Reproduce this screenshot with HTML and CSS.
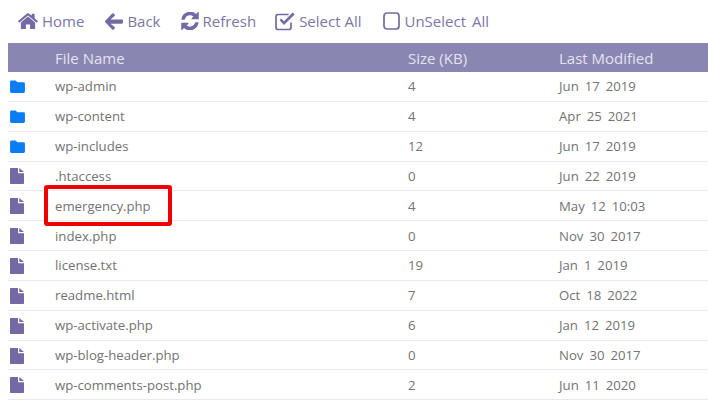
FILE: index.html
```html
<!DOCTYPE html>
<html lang="en">
<head>
<meta charset="utf-8">
<title>File Manager</title>
<link rel="stylesheet" href="styles.css">
</head>
<body>
<svg class="defs" width="0" height="0" aria-hidden="true">
  <symbol id="folder" viewBox="0 0 16 14"><path d="M1.5 0.5H6L7.8 2.5H14.5A1.5 1.5 0 0 1 16 4V12.5A1.5 1.5 0 0 1 14.5 14H1.5A1.5 1.5 0 0 1 0 12.5V2A1.5 1.5 0 0 1 1.5 0.5Z"/></symbol>
  <symbol id="file" viewBox="0 0 14 16"><path d="M0 0.8A.8.8 0 0 1 .8 0H8V4.4A.9.9 0 0 0 8.9 5.3H14V15.2A.8.8 0 0 1 13.2 16H.8A.8.8 0 0 1 0 15.2ZM9.3 0 14 4.1H9.3Z"/></symbol>
</svg>
<nav class="toolbar">
  <span class="tool"><svg class="ico ico-home" viewBox="0 0 20 17"><path d="M10 3.6 2.9 9.5V15.4A.7.7 0 0 0 3.6 16.1H7.9V11.4H12.1V16.1H16.4A.7.7 0 0 0 17.1 15.4V9.5ZM19.8 7.9 16.6 5.2V1.2A.4.4 0 0 0 16.2.8H14A.4.4 0 0 0 13.6 1.2V2.8L11 .6A1.6 1.6 0 0 0 9 .6L.2 7.9A.4.4 0 0 0 .2 8.5L1 9.4A.4.4 0 0 0 1.6 9.4L10 2.4 18.4 9.4A.4.4 0 0 0 19 9.4L19.8 8.5A.4.4 0 0 0 19.8 7.9Z"/></svg>Home</span>
  <span class="tool"><svg class="ico ico-back" viewBox="0 0 18 17"><path d="M9.6 15.6 8.6 16.6A1 1 0 0 1 7.2 16.6L.3 9.3A1.1 1.1 0 0 1 .3 7.8L7.2.5A1 1 0 0 1 8.6.5L9.6 1.5A1.1 1.1 0 0 1 9.6 3L5.5 6.4H16.9A1.1 1.1 0 0 1 18 7.5V9.6A1.1 1.1 0 0 1 16.9 10.7H5.5L9.6 14.1A1.1 1.1 0 0 1 9.6 15.6Z"/></svg>Back</span>
  <span class="tool tool-refresh"><svg class="ico ico-refresh" viewBox="0 0 18 18"><path d="M9 3.2C10.3 3.2 11.5 3.7 12.4 4.5L10.6 6.3A.6.6 0 0 0 11 7.3H17.2A.6.6 0 0 0 17.8 6.7V.6A.6.6 0 0 0 16.8.2L15 2A8.8 8.8 0 0 0 .4 7.2.4.4 0 0 0 .8 7.7H3.4A.4.4 0 0 0 3.8 7.4 5.5 5.5 0 0 1 9 3.2ZM17.2 10.3H14.6A.4.4 0 0 0 14.2 10.6 5.5 5.5 0 0 1 5.6 13.5L7.4 11.7A.6.6 0 0 0 7 10.7H.8A.6.6 0 0 0 .2 11.3V17.4A.6.6 0 0 0 1.2 17.8L3 16A8.8 8.8 0 0 0 17.6 10.8.4.4 0 0 0 17.2 10.3Z"/></svg>Refresh</span>
  <span class="tool tool-select"><svg class="ico ico-check" viewBox="0 0 21 19"><path class="box" d="M16 10.5V15.5A2 2 0 0 1 14 17.5H3A2 2 0 0 1 1 15.5V4.5A2 2 0 0 1 3 2.5H13.5"/><path d="M4.6 8.2 6.2 6.6 9 9.3 17.7.6 19.6 2.5 9 13Z"/></svg>Select All</span>
  <span class="tool tool-unselect"><svg class="ico ico-box" viewBox="0 0 17 18"><rect class="box" x="1" y="1" width="15" height="16" rx="3"/></svg>UnSelect All</span>
</nav>
<table class="files">
  <thead>
    <tr><th class="c-icon"></th><th class="c-name">File Name</th><th class="c-size">Size (KB)</th><th>Last Modified</th></tr>
  </thead>
  <tbody>
    <tr><td class="c-icon"><svg class="i-folder"><use href="#folder"/></svg></td><td>wp-admin</td><td>4</td><td>Jun 17 2019</td></tr>
    <tr><td class="c-icon"><svg class="i-folder"><use href="#folder"/></svg></td><td>wp-content</td><td>4</td><td>Apr 25 2021</td></tr>
    <tr><td class="c-icon"><svg class="i-folder"><use href="#folder"/></svg></td><td>wp-includes</td><td>12</td><td>Jun 17 2019</td></tr>
    <tr><td class="c-icon"><svg class="i-file"><use href="#file"/></svg></td><td>.htaccess</td><td>0</td><td>Jun 22 2019</td></tr>
    <tr><td class="c-icon"><svg class="i-file"><use href="#file"/></svg></td><td class="marked">emergency.php</td><td>4</td><td>May 12 10:03</td></tr>
    <tr><td class="c-icon"><svg class="i-file"><use href="#file"/></svg></td><td>index.php</td><td>0</td><td>Nov 30 2017</td></tr>
    <tr><td class="c-icon"><svg class="i-file"><use href="#file"/></svg></td><td>license.txt</td><td>19</td><td>Jan 1 2019</td></tr>
    <tr><td class="c-icon"><svg class="i-file"><use href="#file"/></svg></td><td>readme.html</td><td>7</td><td>Oct 18 2022</td></tr>
    <tr><td class="c-icon"><svg class="i-file"><use href="#file"/></svg></td><td>wp-activate.php</td><td>6</td><td>Jan 12 2019</td></tr>
    <tr><td class="c-icon"><svg class="i-file"><use href="#file"/></svg></td><td>wp-blog-header.php</td><td>0</td><td>Nov 30 2017</td></tr>
    <tr><td class="c-icon"><svg class="i-file"><use href="#file"/></svg></td><td>wp-comments-post.php</td><td>2</td><td>Jun 11 2020</td></tr>
  </tbody>
</table>
</body>
</html>
```

FILE: styles.css
```css
html, body {
  margin: 0;
  height: 405px;
  overflow: hidden;
  background: #fff;
}
body {
  padding-left: 8px;
  font-family: "Open Sans", "Noto Sans", sans-serif;
  color: #737373;
}
.defs { position: absolute; }
.toolbar {
  height: 43px;
  display: flex;
  align-items: center;
  padding-left: 10px;
  padding-bottom: 1px;
  box-sizing: border-box;
  font-size: 15px;
  color: #7d76a6;
}
.tool { display: flex; align-items: center; gap: 4px; margin-right: 20px; }
.tool:first-child { margin-right: 21px; }
.tool-refresh { margin-right: 19px; }
.tool-select { gap: 3px; margin-right: 22px; }
.tool-unselect { gap: 4px; word-spacing: 2px; }
.ico { fill: #7469a5; flex: none; display: block; }
.ico-home { width: 20px; height: 17px; }
.ico-back { width: 18px; height: 17px; }
.ico-refresh { width: 18px; height: 18px; }
.ico-check { width: 21px; height: 19px; }
.ico-box { width: 17px; height: 18px; }
.box { fill: none; stroke: #7469a5; stroke-width: 1.7; }
.files {
  width: 700px;
  border-collapse: collapse;
  table-layout: fixed;
  font-size: 13.2px;
  word-spacing: 2.5px;
}
.files th {
  height: 29px;
  padding: 0;
  background: #8a86b2;
  color: #e3e2ef;
  font-size: 15px;
  font-weight: 400;
  word-spacing: 0;
  text-align: left;
}
.files td {
  height: 28.85px;
  padding: 0;
  border-bottom: 1px solid #e9e9ec;
}
.c-icon { width: 47px; }
.c-name { width: 353px; }
.c-size { width: 151px; }
.c-icon svg { display: block; margin-top: 1px; }
.i-folder { width: 15px; height: 13px; margin-left: 2px; fill: #0a7cf5; }
.i-file { width: 14px; height: 16px; margin-left: 2px; fill: #7469a5; }
.marked { position: relative; }
.marked::after {
  content: "";
  position: absolute;
  left: -11px;
  top: -6px;
  width: 120px;
  height: 33px;
  border: 4px solid #f00000;
  border-radius: 3px;
}
```
